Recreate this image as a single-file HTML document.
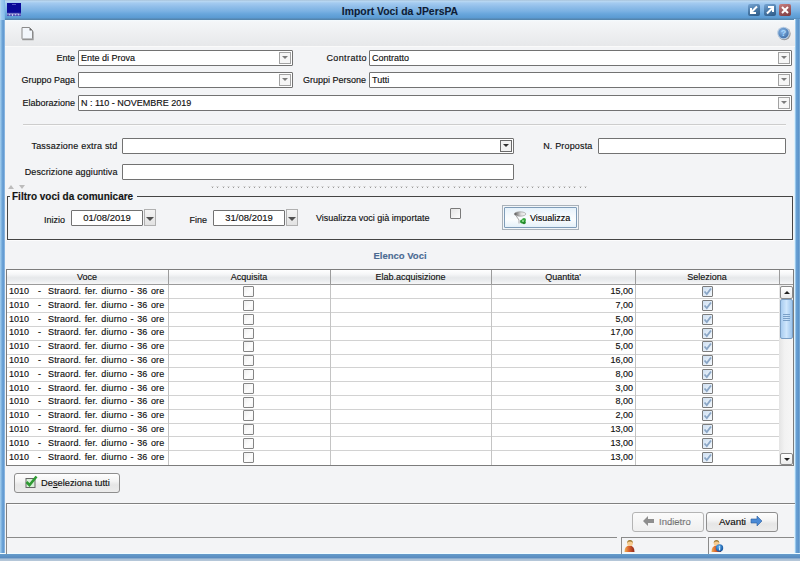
<!DOCTYPE html><html><head><meta charset="utf-8"><style>
*{box-sizing:border-box;margin:0;padding:0}
html,body{width:800px;height:561px;overflow:hidden}
body{position:relative;background:#f3f4f6;font-family:"Liberation Sans",sans-serif;font-size:9px;color:#111;-webkit-text-stroke:0.15px #111}
.a{position:absolute}
.t{position:absolute;white-space:nowrap;line-height:16px;height:16px}
.r{text-align:right}
.cb{position:absolute;background:#fff;border:1px solid #727272;border-radius:1px}
.cb .v{position:absolute;left:2px;top:0;line-height:14px;white-space:nowrap}
.ab{position:absolute;right:1px;top:1px;width:12px;height:12px;border:1px solid #a2a2a2;background:#f6f6f6}
.ab:after{content:"";position:absolute;left:2px;top:3px;border-left:3px solid transparent;border-right:3px solid transparent;border-top:3px solid #7c7c7c}
.ab.dk:after{border-top-color:#303030}
.btn{position:absolute;border:1px solid #8e8e8e;border-radius:3px;background:linear-gradient(#fefefe 0%,#f4f4f4 40%,#e6e6e6 60%,#ececec 100%);}
.ck{position:absolute;width:11px;height:11px;border:1px solid #7a7a7a;border-radius:1px;background:linear-gradient(135deg,#e4e4e4,#fdfdfd)}
.row{position:absolute;left:0;width:773px;height:14px;border-bottom:1px solid #d4d4d4}
.cell{position:absolute;top:0;height:13px;line-height:13px;white-space:nowrap}
.vl{position:absolute;top:0;width:1px;background:#c8c8c8}
</style></head><body>
<div class="a" style="left:0;top:0;width:800px;height:20px;background:linear-gradient(#a9c3da 0px,#b6d6f2 1.5px,#a4cbf0 3px,#8fbde9 7px,#7cb2e3 11px,#68a6dc 14px,#5a9ad2 18px,#5585ad 19px,#5585ad 20px)"></div>
<div class="a" style="left:7px;top:3px;width:14px;height:13px;background:#0a0a98"></div>
<svg class="a" style="left:7px;top:3px" width="14" height="14"><rect x="0" y="0" width="14" height="10.5" fill="#0a0a98"/><rect x="0" y="9.5" width="14" height="3.5" fill="#2a2aa4"/><path d="M1 10 v2.5 M2.5 10.5 v2 M4 10 v2.5 M5.5 10.5 v2.5 M7 10 v2.5 M8.5 10.5 v2 M10 10 v2.5 M11.5 10.5 v2 M13 10.5 v2" stroke="#d8d8f4" stroke-width="0.9"/><path d="M5 1.5 h4" stroke="#6a6ad0" stroke-width="0.8"/></svg>
<div class="a" style="left:0;top:0;width:800px;height:20px;text-align:center;font-weight:bold;font-size:10.4px;line-height:23px;color:#0e1c35;-webkit-text-stroke:0.1px #0e1c35">Import Voci da JPersPA</div>
<div class="a" style="left:748px;top:4px;width:12px;height:12px;border-radius:2px;background:linear-gradient(160deg,#78a6d4,#4a7aa8 50%,#2e5a86)"><svg width="12" height="12" style="position:absolute;left:0;top:0"><path d="M9 2.5 L4 7.5 M3 4 L3 9 L8 9" stroke="#fff" stroke-width="2" fill="none"/></svg></div>
<div class="a" style="left:764px;top:4px;width:12px;height:12px;border-radius:2px;background:linear-gradient(160deg,#78a6d4,#4a7aa8 50%,#2e5a86)"><svg width="12" height="12" style="position:absolute;left:0;top:0"><path d="M3 9.5 L8 4.5 M4 3 L9 3 L9 8" stroke="#fff" stroke-width="2" fill="none"/></svg></div>
<div class="a" style="left:779px;top:4px;width:12px;height:12px;border-radius:2px;background:linear-gradient(160deg,#c88080,#a05a5e 50%,#7a3a40)"><svg width="12" height="12" style="position:absolute;left:0;top:0"><path d="M3 3 L9 9 M9 3 L3 9" stroke="#fff" stroke-width="2" fill="none"/></svg></div>
<div class="a" style="left:0;top:19px;width:5px;height:542px;background:linear-gradient(90deg,#a8d0f0 0,#80b4e0 1.5px,#6098d0 3px,#6a9fd4 4px,#a0c8ea 5px)"></div>
<div class="a" style="left:794px;top:19px;width:6px;height:542px;background:linear-gradient(90deg,#f4f5f7 0,#c8ecff 1px,#6aa2d6 2px,#5a92c8 5px,#90bce0 6px)"></div>
<div class="a" style="left:0;top:553px;width:800px;height:1px;background:#f0fcff"></div>
<div class="a" style="left:0;top:0;width:5px;height:20px;background:linear-gradient(90deg,#b8d8f0 0,#9ccaf0 1.5px,#8cc0ea 4px,#7ab4e4 5px)"></div>
<div class="a" style="left:0;top:554px;width:800px;height:7px;background:linear-gradient(#6a9ccc 0,#6098c8 1px,#5a8cc0 3.5px,#6a98c4 4px,#a8c0d8 5px,#b8c8d8 7px)"></div>
<div class="a" style="left:5px;top:20px;width:790px;height:27px;background:linear-gradient(#f4fbfe 0,#f4f6f8 2px,#e7e8ea 26px,#fafafa 26px)"></div>
<svg class="a" style="left:20px;top:26px" width="15" height="15"><path d="M3 3 H10 L13 6 V13.5 H3 Z" fill="none" stroke="#6a6a6a" stroke-width="1.4" opacity="0.6"/><path d="M2 1.5 H9.5 L12.5 4.5 V12.5 Q12.5 13 12 13 H2.5 Q2 13 2 12.5 Z" fill="#f2f6fb" stroke="#8a8a8a" stroke-width="1"/><path d="M9.5 1.5 L12.5 4.5 H9.5 Z" fill="#6a6a6a"/></svg>
<svg class="a" style="left:776px;top:26px" width="16" height="15"><defs><radialGradient id="hg" cx="0.4" cy="0.35" r="0.7"><stop offset="0" stop-color="#8ab8e8"/><stop offset="1" stop-color="#3f6fa8"/></radialGradient></defs><circle cx="8.3" cy="7.8" r="6.4" fill="#303030" opacity="0.45"/><circle cx="7.5" cy="7" r="6.3" fill="#b8cde4"/><circle cx="7.5" cy="7" r="5.2" fill="url(#hg)"/><text x="7.6" y="10.2" font-family="Liberation Sans" font-weight="bold" font-size="9" fill="#a8d8ff" text-anchor="middle">?</text></svg>
<div class="t r" style="left:-125px;width:200px;top:50px;height:16px;line-height:16px;">Ente</div>
<div class="cb" style="left:78px;top:50px;width:215px;height:16px"><div class="v">Ente di Prova</div><div class="ab" style=""></div></div>
<div class="t r" style="left:167px;width:200px;top:50px;height:16px;line-height:16px;letter-spacing:0.4px">Contratto</div>
<div class="cb" style="left:369px;top:50px;width:423px;height:16px"><div class="v">Contratto</div><div class="ab" style=""></div></div>
<div class="t r" style="left:-125px;width:200px;top:72px;height:16px;line-height:16px;">Gruppo Paga</div>
<div class="cb" style="left:78px;top:72px;width:215px;height:16px"><div class="ab" style=""></div></div>
<div class="t r" style="left:166px;width:200px;top:72px;height:16px;line-height:16px;">Gruppi Persone</div>
<div class="cb" style="left:369px;top:72px;width:423px;height:16px"><div class="v">Tutti</div><div class="ab" style=""></div></div>
<div class="t r" style="left:-125px;width:200px;top:95px;height:16px;line-height:16px;">Elaborazione</div>
<div class="cb" style="left:78px;top:95px;width:714px;height:16px"><div class="v">N : 110 - NOVEMBRE 2019</div><div class="ab" style=""></div></div>
<div class="a" style="left:23px;top:124px;width:763px;height:1px;background:#cdcdcd"></div>
<div class="a" style="left:23px;top:125px;width:763px;height:1px;background:#fbfbfb"></div>
<div class="t r" style="left:-82.5px;width:200px;top:138px;height:16px;line-height:16px;letter-spacing:0.2px">Tassazione extra std</div>
<div class="cb" style="left:122px;top:138px;width:392px;height:16px"><div class="ab dk" style="border-color:#6a6a6a;background:#f2f2f2"></div></div>
<div class="t r" style="left:392.5px;width:200px;top:138px;height:16px;line-height:16px;letter-spacing:0.16px">N. Proposta</div>
<div class="cb" style="left:598px;top:138px;width:188px;height:16px"></div>
<div class="t r" style="left:-82.5px;width:200px;top:164px;height:16px;line-height:16px;letter-spacing:0.1px">Descrizione aggiuntiva</div>
<div class="cb" style="left:122px;top:164px;width:392px;height:16px"></div>
<div class="a" style="left:8px;top:185px;width:0;height:0;border-left:3.5px solid transparent;border-right:3.5px solid transparent;border-bottom:4px solid #bcbcbc"></div>
<div class="a" style="left:18.5px;top:185px;width:0;height:0;border-left:3.5px solid transparent;border-right:3.5px solid transparent;border-top:4px solid #bcbcbc"></div>
<div class="a" style="left:212px;top:187px;width:1px;height:1px;background:#9a9a9a"></div><div class="a" style="left:211px;top:186px;width:3px;height:1px;background:#dcdcdc"></div><div class="a" style="left:217px;top:187px;width:1px;height:1px;background:#9a9a9a"></div><div class="a" style="left:216px;top:186px;width:3px;height:1px;background:#dcdcdc"></div><div class="a" style="left:223px;top:187px;width:1px;height:1px;background:#9a9a9a"></div><div class="a" style="left:222px;top:186px;width:3px;height:1px;background:#dcdcdc"></div><div class="a" style="left:228px;top:187px;width:1px;height:1px;background:#9a9a9a"></div><div class="a" style="left:227px;top:186px;width:3px;height:1px;background:#dcdcdc"></div><div class="a" style="left:233px;top:187px;width:1px;height:1px;background:#9a9a9a"></div><div class="a" style="left:232px;top:186px;width:3px;height:1px;background:#dcdcdc"></div><div class="a" style="left:238px;top:187px;width:1px;height:1px;background:#9a9a9a"></div><div class="a" style="left:237px;top:186px;width:3px;height:1px;background:#dcdcdc"></div><div class="a" style="left:244px;top:187px;width:1px;height:1px;background:#9a9a9a"></div><div class="a" style="left:243px;top:186px;width:3px;height:1px;background:#dcdcdc"></div><div class="a" style="left:249px;top:187px;width:1px;height:1px;background:#9a9a9a"></div><div class="a" style="left:248px;top:186px;width:3px;height:1px;background:#dcdcdc"></div><div class="a" style="left:254px;top:187px;width:1px;height:1px;background:#9a9a9a"></div><div class="a" style="left:253px;top:186px;width:3px;height:1px;background:#dcdcdc"></div><div class="a" style="left:259px;top:187px;width:1px;height:1px;background:#9a9a9a"></div><div class="a" style="left:258px;top:186px;width:3px;height:1px;background:#dcdcdc"></div><div class="a" style="left:265px;top:187px;width:1px;height:1px;background:#9a9a9a"></div><div class="a" style="left:264px;top:186px;width:3px;height:1px;background:#dcdcdc"></div><div class="a" style="left:270px;top:187px;width:1px;height:1px;background:#9a9a9a"></div><div class="a" style="left:269px;top:186px;width:3px;height:1px;background:#dcdcdc"></div><div class="a" style="left:275px;top:187px;width:1px;height:1px;background:#9a9a9a"></div><div class="a" style="left:274px;top:186px;width:3px;height:1px;background:#dcdcdc"></div><div class="a" style="left:280px;top:187px;width:1px;height:1px;background:#9a9a9a"></div><div class="a" style="left:279px;top:186px;width:3px;height:1px;background:#dcdcdc"></div><div class="a" style="left:286px;top:187px;width:1px;height:1px;background:#9a9a9a"></div><div class="a" style="left:285px;top:186px;width:3px;height:1px;background:#dcdcdc"></div><div class="a" style="left:291px;top:187px;width:1px;height:1px;background:#9a9a9a"></div><div class="a" style="left:290px;top:186px;width:3px;height:1px;background:#dcdcdc"></div><div class="a" style="left:296px;top:187px;width:1px;height:1px;background:#9a9a9a"></div><div class="a" style="left:295px;top:186px;width:3px;height:1px;background:#dcdcdc"></div><div class="a" style="left:301px;top:187px;width:1px;height:1px;background:#9a9a9a"></div><div class="a" style="left:300px;top:186px;width:3px;height:1px;background:#dcdcdc"></div><div class="a" style="left:307px;top:187px;width:1px;height:1px;background:#9a9a9a"></div><div class="a" style="left:306px;top:186px;width:3px;height:1px;background:#dcdcdc"></div><div class="a" style="left:312px;top:187px;width:1px;height:1px;background:#9a9a9a"></div><div class="a" style="left:311px;top:186px;width:3px;height:1px;background:#dcdcdc"></div><div class="a" style="left:317px;top:187px;width:1px;height:1px;background:#9a9a9a"></div><div class="a" style="left:316px;top:186px;width:3px;height:1px;background:#dcdcdc"></div><div class="a" style="left:322px;top:187px;width:1px;height:1px;background:#9a9a9a"></div><div class="a" style="left:321px;top:186px;width:3px;height:1px;background:#dcdcdc"></div><div class="a" style="left:328px;top:187px;width:1px;height:1px;background:#9a9a9a"></div><div class="a" style="left:327px;top:186px;width:3px;height:1px;background:#dcdcdc"></div><div class="a" style="left:333px;top:187px;width:1px;height:1px;background:#9a9a9a"></div><div class="a" style="left:332px;top:186px;width:3px;height:1px;background:#dcdcdc"></div><div class="a" style="left:338px;top:187px;width:1px;height:1px;background:#9a9a9a"></div><div class="a" style="left:337px;top:186px;width:3px;height:1px;background:#dcdcdc"></div><div class="a" style="left:343px;top:187px;width:1px;height:1px;background:#9a9a9a"></div><div class="a" style="left:342px;top:186px;width:3px;height:1px;background:#dcdcdc"></div><div class="a" style="left:349px;top:187px;width:1px;height:1px;background:#9a9a9a"></div><div class="a" style="left:348px;top:186px;width:3px;height:1px;background:#dcdcdc"></div><div class="a" style="left:354px;top:187px;width:1px;height:1px;background:#9a9a9a"></div><div class="a" style="left:353px;top:186px;width:3px;height:1px;background:#dcdcdc"></div><div class="a" style="left:359px;top:187px;width:1px;height:1px;background:#9a9a9a"></div><div class="a" style="left:358px;top:186px;width:3px;height:1px;background:#dcdcdc"></div><div class="a" style="left:364px;top:187px;width:1px;height:1px;background:#9a9a9a"></div><div class="a" style="left:363px;top:186px;width:3px;height:1px;background:#dcdcdc"></div><div class="a" style="left:370px;top:187px;width:1px;height:1px;background:#9a9a9a"></div><div class="a" style="left:369px;top:186px;width:3px;height:1px;background:#dcdcdc"></div><div class="a" style="left:375px;top:187px;width:1px;height:1px;background:#9a9a9a"></div><div class="a" style="left:374px;top:186px;width:3px;height:1px;background:#dcdcdc"></div><div class="a" style="left:380px;top:187px;width:1px;height:1px;background:#9a9a9a"></div><div class="a" style="left:379px;top:186px;width:3px;height:1px;background:#dcdcdc"></div><div class="a" style="left:385px;top:187px;width:1px;height:1px;background:#9a9a9a"></div><div class="a" style="left:384px;top:186px;width:3px;height:1px;background:#dcdcdc"></div><div class="a" style="left:391px;top:187px;width:1px;height:1px;background:#9a9a9a"></div><div class="a" style="left:390px;top:186px;width:3px;height:1px;background:#dcdcdc"></div><div class="a" style="left:396px;top:187px;width:1px;height:1px;background:#9a9a9a"></div><div class="a" style="left:395px;top:186px;width:3px;height:1px;background:#dcdcdc"></div><div class="a" style="left:401px;top:187px;width:1px;height:1px;background:#9a9a9a"></div><div class="a" style="left:400px;top:186px;width:3px;height:1px;background:#dcdcdc"></div><div class="a" style="left:406px;top:187px;width:1px;height:1px;background:#9a9a9a"></div><div class="a" style="left:405px;top:186px;width:3px;height:1px;background:#dcdcdc"></div><div class="a" style="left:412px;top:187px;width:1px;height:1px;background:#9a9a9a"></div><div class="a" style="left:411px;top:186px;width:3px;height:1px;background:#dcdcdc"></div><div class="a" style="left:417px;top:187px;width:1px;height:1px;background:#9a9a9a"></div><div class="a" style="left:416px;top:186px;width:3px;height:1px;background:#dcdcdc"></div><div class="a" style="left:422px;top:187px;width:1px;height:1px;background:#9a9a9a"></div><div class="a" style="left:421px;top:186px;width:3px;height:1px;background:#dcdcdc"></div><div class="a" style="left:427px;top:187px;width:1px;height:1px;background:#9a9a9a"></div><div class="a" style="left:426px;top:186px;width:3px;height:1px;background:#dcdcdc"></div><div class="a" style="left:433px;top:187px;width:1px;height:1px;background:#9a9a9a"></div><div class="a" style="left:432px;top:186px;width:3px;height:1px;background:#dcdcdc"></div><div class="a" style="left:438px;top:187px;width:1px;height:1px;background:#9a9a9a"></div><div class="a" style="left:437px;top:186px;width:3px;height:1px;background:#dcdcdc"></div><div class="a" style="left:443px;top:187px;width:1px;height:1px;background:#9a9a9a"></div><div class="a" style="left:442px;top:186px;width:3px;height:1px;background:#dcdcdc"></div><div class="a" style="left:448px;top:187px;width:1px;height:1px;background:#9a9a9a"></div><div class="a" style="left:447px;top:186px;width:3px;height:1px;background:#dcdcdc"></div><div class="a" style="left:454px;top:187px;width:1px;height:1px;background:#9a9a9a"></div><div class="a" style="left:453px;top:186px;width:3px;height:1px;background:#dcdcdc"></div><div class="a" style="left:459px;top:187px;width:1px;height:1px;background:#9a9a9a"></div><div class="a" style="left:458px;top:186px;width:3px;height:1px;background:#dcdcdc"></div><div class="a" style="left:464px;top:187px;width:1px;height:1px;background:#9a9a9a"></div><div class="a" style="left:463px;top:186px;width:3px;height:1px;background:#dcdcdc"></div><div class="a" style="left:469px;top:187px;width:1px;height:1px;background:#9a9a9a"></div><div class="a" style="left:468px;top:186px;width:3px;height:1px;background:#dcdcdc"></div><div class="a" style="left:475px;top:187px;width:1px;height:1px;background:#9a9a9a"></div><div class="a" style="left:474px;top:186px;width:3px;height:1px;background:#dcdcdc"></div><div class="a" style="left:480px;top:187px;width:1px;height:1px;background:#9a9a9a"></div><div class="a" style="left:479px;top:186px;width:3px;height:1px;background:#dcdcdc"></div><div class="a" style="left:485px;top:187px;width:1px;height:1px;background:#9a9a9a"></div><div class="a" style="left:484px;top:186px;width:3px;height:1px;background:#dcdcdc"></div><div class="a" style="left:490px;top:187px;width:1px;height:1px;background:#9a9a9a"></div><div class="a" style="left:489px;top:186px;width:3px;height:1px;background:#dcdcdc"></div><div class="a" style="left:496px;top:187px;width:1px;height:1px;background:#9a9a9a"></div><div class="a" style="left:495px;top:186px;width:3px;height:1px;background:#dcdcdc"></div><div class="a" style="left:501px;top:187px;width:1px;height:1px;background:#9a9a9a"></div><div class="a" style="left:500px;top:186px;width:3px;height:1px;background:#dcdcdc"></div><div class="a" style="left:506px;top:187px;width:1px;height:1px;background:#9a9a9a"></div><div class="a" style="left:505px;top:186px;width:3px;height:1px;background:#dcdcdc"></div><div class="a" style="left:511px;top:187px;width:1px;height:1px;background:#9a9a9a"></div><div class="a" style="left:510px;top:186px;width:3px;height:1px;background:#dcdcdc"></div><div class="a" style="left:517px;top:187px;width:1px;height:1px;background:#9a9a9a"></div><div class="a" style="left:516px;top:186px;width:3px;height:1px;background:#dcdcdc"></div><div class="a" style="left:522px;top:187px;width:1px;height:1px;background:#9a9a9a"></div><div class="a" style="left:521px;top:186px;width:3px;height:1px;background:#dcdcdc"></div><div class="a" style="left:527px;top:187px;width:1px;height:1px;background:#9a9a9a"></div><div class="a" style="left:526px;top:186px;width:3px;height:1px;background:#dcdcdc"></div><div class="a" style="left:532px;top:187px;width:1px;height:1px;background:#9a9a9a"></div><div class="a" style="left:531px;top:186px;width:3px;height:1px;background:#dcdcdc"></div><div class="a" style="left:538px;top:187px;width:1px;height:1px;background:#9a9a9a"></div><div class="a" style="left:537px;top:186px;width:3px;height:1px;background:#dcdcdc"></div><div class="a" style="left:543px;top:187px;width:1px;height:1px;background:#9a9a9a"></div><div class="a" style="left:542px;top:186px;width:3px;height:1px;background:#dcdcdc"></div><div class="a" style="left:548px;top:187px;width:1px;height:1px;background:#9a9a9a"></div><div class="a" style="left:547px;top:186px;width:3px;height:1px;background:#dcdcdc"></div><div class="a" style="left:553px;top:187px;width:1px;height:1px;background:#9a9a9a"></div><div class="a" style="left:552px;top:186px;width:3px;height:1px;background:#dcdcdc"></div><div class="a" style="left:559px;top:187px;width:1px;height:1px;background:#9a9a9a"></div><div class="a" style="left:558px;top:186px;width:3px;height:1px;background:#dcdcdc"></div><div class="a" style="left:564px;top:187px;width:1px;height:1px;background:#9a9a9a"></div><div class="a" style="left:563px;top:186px;width:3px;height:1px;background:#dcdcdc"></div><div class="a" style="left:569px;top:187px;width:1px;height:1px;background:#9a9a9a"></div><div class="a" style="left:568px;top:186px;width:3px;height:1px;background:#dcdcdc"></div><div class="a" style="left:574px;top:187px;width:1px;height:1px;background:#9a9a9a"></div><div class="a" style="left:573px;top:186px;width:3px;height:1px;background:#dcdcdc"></div><div class="a" style="left:580px;top:187px;width:1px;height:1px;background:#9a9a9a"></div><div class="a" style="left:579px;top:186px;width:3px;height:1px;background:#dcdcdc"></div><div class="a" style="left:585px;top:187px;width:1px;height:1px;background:#9a9a9a"></div><div class="a" style="left:584px;top:186px;width:3px;height:1px;background:#dcdcdc"></div>
<div class="a" style="left:7px;top:196px;width:786px;height:44px;border:1px solid #444"></div>
<div class="a" style="left:7px;top:240px;width:787px;height:1px;background:#fcfcfd"></div>
<div class="a" style="left:10px;top:189px;width:127px;height:14px;background:#f3f4f6"></div>
<div class="t" style="left:12px;top:190px;height:14px;line-height:14px;font-weight:bold;font-size:10px;color:#141414">Filtro voci da comunicare</div>
<div class="t r" style="left:-135px;width:200px;top:212px;height:16px;line-height:16px;">Inizio</div>
<div class="cb" style="left:71px;top:210px;width:72px;height:16px;text-align:center;line-height:14px;font-size:9.5px">01/08/2019</div>
<div class="a" style="left:144px;top:209px;width:12px;height:17px;border:1px solid #b0b0b0;background:linear-gradient(#f4f4f4,#e2e2e2)"><div class="a" style="left:1px;top:7px;border-left:4px solid transparent;border-right:4px solid transparent;border-top:4px solid #505050"></div></div>
<div class="t r" style="left:7px;width:200px;top:212px;height:16px;line-height:16px;">Fine</div>
<div class="cb" style="left:213px;top:210px;width:72px;height:16px;text-align:center;line-height:14px;font-size:9.5px">31/08/2019</div>
<div class="a" style="left:286px;top:209px;width:12px;height:17px;border:1px solid #b0b0b0;background:linear-gradient(#f4f4f4,#e2e2e2)"><div class="a" style="left:1px;top:7px;border-left:4px solid transparent;border-right:4px solid transparent;border-top:4px solid #505050"></div></div>
<div class="t" style="left:316px;top:210px">Visualizza voci già importate</div>
<div class="ck" style="left:450px;top:208px"></div>
<div class="a" style="left:502px;top:205px;width:77px;height:25px;border:1px solid #a9b1b9;background:#f2f6f9"></div>
<div class="a" style="left:504px;top:207px;width:73px;height:21px;border:1px solid #7f9cb8;border-radius:1px;background:linear-gradient(#e6f2fb 0%,#f6fafd 40%,#fbfdfe 60%,#e4f0f9 100%)"></div>
<svg class="a" style="left:513px;top:211px" width="15" height="14"><defs><linearGradient id="fg" x1="0" x2="1"><stop offset="0" stop-color="#505050"/><stop offset="0.6" stop-color="#e0e0e0"/><stop offset="1" stop-color="#f8f8f8"/></linearGradient></defs><ellipse cx="7" cy="3" rx="5.8" ry="2.2" fill="url(#fg)" stroke="#909090" stroke-width="0.6"/><path d="M2.5 4 L6 9 V12.5" fill="none" stroke="#a8a8a8" stroke-width="1"/><circle cx="9" cy="10.5" r="2" fill="#2a9a34"/><circle cx="11" cy="9" r="2" fill="#38aa40"/><circle cx="11" cy="11.5" r="1.8" fill="#248a2c"/><circle cx="10" cy="10" r="1" fill="#9ae09a"/></svg>
<div class="t" style="left:530px;top:210px;color:#000">Visualizza</div>
<div class="a" style="left:0;top:247px;width:800px;height:17px;line-height:17px;text-align:center;font-weight:bold;font-size:9.5px;color:#4a6a92;-webkit-text-stroke:0.1px #4a6a92">Elenco Voci</div>
<div class="a" style="left:6px;top:269px;width:788px;height:197px;border:1px solid #7c7c7c;background:#fff;overflow:hidden">
<div class="a" style="left:0;top:0;width:786px;height:15px;background:linear-gradient(#ffffff 0,#f6f7f8 30%,#e6e8ea 55%,#eceef0 80%,#f7f7f8 100%);border-bottom:1px solid #9a9a9a"></div>
<div class="cell" style="left:-1px;width:162px;text-align:center;height:15px;line-height:15px">Voce</div>
<div class="cell" style="left:161px;width:162px;text-align:center;height:15px;line-height:15px">Acquisita</div>
<div class="cell" style="left:323px;width:161px;text-align:center;height:15px;line-height:15px">Elab.acquisizione</div>
<div class="cell" style="left:484px;width:144px;text-align:center;height:15px;line-height:15px">Quantita'</div>
<div class="cell" style="left:628px;width:144px;text-align:center;height:15px;line-height:15px">Seleziona</div>
<div class="a" style="left:161px;top:0;width:1px;height:15px;background:#9c9c9c"></div>
<div class="a" style="left:323px;top:0;width:1px;height:15px;background:#9c9c9c"></div>
<div class="a" style="left:484px;top:0;width:1px;height:15px;background:#9c9c9c"></div>
<div class="a" style="left:628px;top:0;width:1px;height:15px;background:#9c9c9c"></div>
<div class="a" style="left:772px;top:0;width:1px;height:15px;background:#9c9c9c"></div>
<div class="a" style="left:772px;top:15px;width:14px;height:181px;background:linear-gradient(90deg,#e4e4e4,#f2f2f2 40%,#f6f6f6)"></div>
<div class="cell" style="left:2px;top:15px;height:14px;line-height:13px">1010</div><div class="cell" style="left:31px;top:15px;height:14px;line-height:13px">-</div><div class="cell" style="left:41px;top:15px;height:14px;line-height:13px;letter-spacing:0.15px;word-spacing:0.8px">Straord. fer. diurno - 36 ore</div>
<div class="ck" style="left:236px;top:16px;width:11px;height:11px;border-color:#858585;background:linear-gradient(135deg,#f0f0f0,#fdfdfd 60%,#f2f2f2)"></div>
<div class="cell r" style="left:484px;width:142px;top:15px;height:14px;line-height:13px">15,00</div>
<div class="ck" style="left:695px;top:16px;width:11px;height:11px;border-color:#7c7c7c;background:linear-gradient(135deg,#cfe0f2,#f4f8fc)"><svg width="9" height="9" style="position:absolute;left:0;top:0"><path d="M1.5 4.5 L3.8 7 L8 1.5" stroke="#8aa6c6" stroke-width="1.8" fill="none"/></svg></div>
<div class="a" style="left:0;top:28px;width:772px;height:1px;background:#d2d2d2"></div>
<div class="cell" style="left:2px;top:29px;height:14px;line-height:13px">1010</div><div class="cell" style="left:31px;top:29px;height:14px;line-height:13px">-</div><div class="cell" style="left:41px;top:29px;height:14px;line-height:13px;letter-spacing:0.15px;word-spacing:0.8px">Straord. fer. diurno - 36 ore</div>
<div class="ck" style="left:236px;top:30px;width:11px;height:11px;border-color:#858585;background:linear-gradient(135deg,#f0f0f0,#fdfdfd 60%,#f2f2f2)"></div>
<div class="cell r" style="left:484px;width:142px;top:29px;height:14px;line-height:13px">7,00</div>
<div class="ck" style="left:695px;top:30px;width:11px;height:11px;border-color:#7c7c7c;background:linear-gradient(135deg,#cfe0f2,#f4f8fc)"><svg width="9" height="9" style="position:absolute;left:0;top:0"><path d="M1.5 4.5 L3.8 7 L8 1.5" stroke="#8aa6c6" stroke-width="1.8" fill="none"/></svg></div>
<div class="a" style="left:0;top:42px;width:772px;height:1px;background:#d2d2d2"></div>
<div class="cell" style="left:2px;top:43px;height:14px;line-height:13px">1010</div><div class="cell" style="left:31px;top:43px;height:14px;line-height:13px">-</div><div class="cell" style="left:41px;top:43px;height:14px;line-height:13px;letter-spacing:0.15px;word-spacing:0.8px">Straord. fer. diurno - 36 ore</div>
<div class="ck" style="left:236px;top:44px;width:11px;height:11px;border-color:#858585;background:linear-gradient(135deg,#f0f0f0,#fdfdfd 60%,#f2f2f2)"></div>
<div class="cell r" style="left:484px;width:142px;top:43px;height:14px;line-height:13px">5,00</div>
<div class="ck" style="left:695px;top:44px;width:11px;height:11px;border-color:#7c7c7c;background:linear-gradient(135deg,#cfe0f2,#f4f8fc)"><svg width="9" height="9" style="position:absolute;left:0;top:0"><path d="M1.5 4.5 L3.8 7 L8 1.5" stroke="#8aa6c6" stroke-width="1.8" fill="none"/></svg></div>
<div class="a" style="left:0;top:56px;width:772px;height:1px;background:#d2d2d2"></div>
<div class="cell" style="left:2px;top:56px;height:14px;line-height:13px">1010</div><div class="cell" style="left:31px;top:56px;height:14px;line-height:13px">-</div><div class="cell" style="left:41px;top:56px;height:14px;line-height:13px;letter-spacing:0.15px;word-spacing:0.8px">Straord. fer. diurno - 36 ore</div>
<div class="ck" style="left:236px;top:58px;width:11px;height:11px;border-color:#858585;background:linear-gradient(135deg,#f0f0f0,#fdfdfd 60%,#f2f2f2)"></div>
<div class="cell r" style="left:484px;width:142px;top:56px;height:14px;line-height:13px">17,00</div>
<div class="ck" style="left:695px;top:58px;width:11px;height:11px;border-color:#7c7c7c;background:linear-gradient(135deg,#cfe0f2,#f4f8fc)"><svg width="9" height="9" style="position:absolute;left:0;top:0"><path d="M1.5 4.5 L3.8 7 L8 1.5" stroke="#8aa6c6" stroke-width="1.8" fill="none"/></svg></div>
<div class="a" style="left:0;top:70px;width:772px;height:1px;background:#d2d2d2"></div>
<div class="cell" style="left:2px;top:70px;height:14px;line-height:13px">1010</div><div class="cell" style="left:31px;top:70px;height:14px;line-height:13px">-</div><div class="cell" style="left:41px;top:70px;height:14px;line-height:13px;letter-spacing:0.15px;word-spacing:0.8px">Straord. fer. diurno - 36 ore</div>
<div class="ck" style="left:236px;top:71px;width:11px;height:11px;border-color:#858585;background:linear-gradient(135deg,#f0f0f0,#fdfdfd 60%,#f2f2f2)"></div>
<div class="cell r" style="left:484px;width:142px;top:70px;height:14px;line-height:13px">5,00</div>
<div class="ck" style="left:695px;top:71px;width:11px;height:11px;border-color:#7c7c7c;background:linear-gradient(135deg,#cfe0f2,#f4f8fc)"><svg width="9" height="9" style="position:absolute;left:0;top:0"><path d="M1.5 4.5 L3.8 7 L8 1.5" stroke="#8aa6c6" stroke-width="1.8" fill="none"/></svg></div>
<div class="a" style="left:0;top:84px;width:772px;height:1px;background:#d2d2d2"></div>
<div class="cell" style="left:2px;top:84px;height:14px;line-height:13px">1010</div><div class="cell" style="left:31px;top:84px;height:14px;line-height:13px">-</div><div class="cell" style="left:41px;top:84px;height:14px;line-height:13px;letter-spacing:0.15px;word-spacing:0.8px">Straord. fer. diurno - 36 ore</div>
<div class="ck" style="left:236px;top:85px;width:11px;height:11px;border-color:#858585;background:linear-gradient(135deg,#f0f0f0,#fdfdfd 60%,#f2f2f2)"></div>
<div class="cell r" style="left:484px;width:142px;top:84px;height:14px;line-height:13px">16,00</div>
<div class="ck" style="left:695px;top:85px;width:11px;height:11px;border-color:#7c7c7c;background:linear-gradient(135deg,#cfe0f2,#f4f8fc)"><svg width="9" height="9" style="position:absolute;left:0;top:0"><path d="M1.5 4.5 L3.8 7 L8 1.5" stroke="#8aa6c6" stroke-width="1.8" fill="none"/></svg></div>
<div class="a" style="left:0;top:97px;width:772px;height:1px;background:#d2d2d2"></div>
<div class="cell" style="left:2px;top:98px;height:14px;line-height:13px">1010</div><div class="cell" style="left:31px;top:98px;height:14px;line-height:13px">-</div><div class="cell" style="left:41px;top:98px;height:14px;line-height:13px;letter-spacing:0.15px;word-spacing:0.8px">Straord. fer. diurno - 36 ore</div>
<div class="ck" style="left:236px;top:99px;width:11px;height:11px;border-color:#858585;background:linear-gradient(135deg,#f0f0f0,#fdfdfd 60%,#f2f2f2)"></div>
<div class="cell r" style="left:484px;width:142px;top:98px;height:14px;line-height:13px">8,00</div>
<div class="ck" style="left:695px;top:99px;width:11px;height:11px;border-color:#7c7c7c;background:linear-gradient(135deg,#cfe0f2,#f4f8fc)"><svg width="9" height="9" style="position:absolute;left:0;top:0"><path d="M1.5 4.5 L3.8 7 L8 1.5" stroke="#8aa6c6" stroke-width="1.8" fill="none"/></svg></div>
<div class="a" style="left:0;top:111px;width:772px;height:1px;background:#d2d2d2"></div>
<div class="cell" style="left:2px;top:112px;height:14px;line-height:13px">1010</div><div class="cell" style="left:31px;top:112px;height:14px;line-height:13px">-</div><div class="cell" style="left:41px;top:112px;height:14px;line-height:13px;letter-spacing:0.15px;word-spacing:0.8px">Straord. fer. diurno - 36 ore</div>
<div class="ck" style="left:236px;top:113px;width:11px;height:11px;border-color:#858585;background:linear-gradient(135deg,#f0f0f0,#fdfdfd 60%,#f2f2f2)"></div>
<div class="cell r" style="left:484px;width:142px;top:112px;height:14px;line-height:13px">3,00</div>
<div class="ck" style="left:695px;top:113px;width:11px;height:11px;border-color:#7c7c7c;background:linear-gradient(135deg,#cfe0f2,#f4f8fc)"><svg width="9" height="9" style="position:absolute;left:0;top:0"><path d="M1.5 4.5 L3.8 7 L8 1.5" stroke="#8aa6c6" stroke-width="1.8" fill="none"/></svg></div>
<div class="a" style="left:0;top:125px;width:772px;height:1px;background:#d2d2d2"></div>
<div class="cell" style="left:2px;top:125px;height:14px;line-height:13px">1010</div><div class="cell" style="left:31px;top:125px;height:14px;line-height:13px">-</div><div class="cell" style="left:41px;top:125px;height:14px;line-height:13px;letter-spacing:0.15px;word-spacing:0.8px">Straord. fer. diurno - 36 ore</div>
<div class="ck" style="left:236px;top:127px;width:11px;height:11px;border-color:#858585;background:linear-gradient(135deg,#f0f0f0,#fdfdfd 60%,#f2f2f2)"></div>
<div class="cell r" style="left:484px;width:142px;top:125px;height:14px;line-height:13px">8,00</div>
<div class="ck" style="left:695px;top:127px;width:11px;height:11px;border-color:#7c7c7c;background:linear-gradient(135deg,#cfe0f2,#f4f8fc)"><svg width="9" height="9" style="position:absolute;left:0;top:0"><path d="M1.5 4.5 L3.8 7 L8 1.5" stroke="#8aa6c6" stroke-width="1.8" fill="none"/></svg></div>
<div class="a" style="left:0;top:139px;width:772px;height:1px;background:#d2d2d2"></div>
<div class="cell" style="left:2px;top:139px;height:14px;line-height:13px">1010</div><div class="cell" style="left:31px;top:139px;height:14px;line-height:13px">-</div><div class="cell" style="left:41px;top:139px;height:14px;line-height:13px;letter-spacing:0.15px;word-spacing:0.8px">Straord. fer. diurno - 36 ore</div>
<div class="ck" style="left:236px;top:140px;width:11px;height:11px;border-color:#858585;background:linear-gradient(135deg,#f0f0f0,#fdfdfd 60%,#f2f2f2)"></div>
<div class="cell r" style="left:484px;width:142px;top:139px;height:14px;line-height:13px">2,00</div>
<div class="ck" style="left:695px;top:140px;width:11px;height:11px;border-color:#7c7c7c;background:linear-gradient(135deg,#cfe0f2,#f4f8fc)"><svg width="9" height="9" style="position:absolute;left:0;top:0"><path d="M1.5 4.5 L3.8 7 L8 1.5" stroke="#8aa6c6" stroke-width="1.8" fill="none"/></svg></div>
<div class="a" style="left:0;top:153px;width:772px;height:1px;background:#d2d2d2"></div>
<div class="cell" style="left:2px;top:153px;height:14px;line-height:13px">1010</div><div class="cell" style="left:31px;top:153px;height:14px;line-height:13px">-</div><div class="cell" style="left:41px;top:153px;height:14px;line-height:13px;letter-spacing:0.15px;word-spacing:0.8px">Straord. fer. diurno - 36 ore</div>
<div class="ck" style="left:236px;top:154px;width:11px;height:11px;border-color:#858585;background:linear-gradient(135deg,#f0f0f0,#fdfdfd 60%,#f2f2f2)"></div>
<div class="cell r" style="left:484px;width:142px;top:153px;height:14px;line-height:13px">13,00</div>
<div class="ck" style="left:695px;top:154px;width:11px;height:11px;border-color:#7c7c7c;background:linear-gradient(135deg,#cfe0f2,#f4f8fc)"><svg width="9" height="9" style="position:absolute;left:0;top:0"><path d="M1.5 4.5 L3.8 7 L8 1.5" stroke="#8aa6c6" stroke-width="1.8" fill="none"/></svg></div>
<div class="a" style="left:0;top:166px;width:772px;height:1px;background:#d2d2d2"></div>
<div class="cell" style="left:2px;top:167px;height:14px;line-height:13px">1010</div><div class="cell" style="left:31px;top:167px;height:14px;line-height:13px">-</div><div class="cell" style="left:41px;top:167px;height:14px;line-height:13px;letter-spacing:0.15px;word-spacing:0.8px">Straord. fer. diurno - 36 ore</div>
<div class="ck" style="left:236px;top:168px;width:11px;height:11px;border-color:#858585;background:linear-gradient(135deg,#f0f0f0,#fdfdfd 60%,#f2f2f2)"></div>
<div class="cell r" style="left:484px;width:142px;top:167px;height:14px;line-height:13px">13,00</div>
<div class="ck" style="left:695px;top:168px;width:11px;height:11px;border-color:#7c7c7c;background:linear-gradient(135deg,#cfe0f2,#f4f8fc)"><svg width="9" height="9" style="position:absolute;left:0;top:0"><path d="M1.5 4.5 L3.8 7 L8 1.5" stroke="#8aa6c6" stroke-width="1.8" fill="none"/></svg></div>
<div class="a" style="left:0;top:180px;width:772px;height:1px;background:#d2d2d2"></div>
<div class="cell" style="left:2px;top:181px;height:14px;line-height:13px">1010</div><div class="cell" style="left:31px;top:181px;height:14px;line-height:13px">-</div><div class="cell" style="left:41px;top:181px;height:14px;line-height:13px;letter-spacing:0.15px;word-spacing:0.8px">Straord. fer. diurno - 36 ore</div>
<div class="ck" style="left:236px;top:182px;width:11px;height:11px;border-color:#858585;background:linear-gradient(135deg,#f0f0f0,#fdfdfd 60%,#f2f2f2)"></div>
<div class="cell r" style="left:484px;width:142px;top:181px;height:14px;line-height:13px">13,00</div>
<div class="ck" style="left:695px;top:182px;width:11px;height:11px;border-color:#7c7c7c;background:linear-gradient(135deg,#cfe0f2,#f4f8fc)"><svg width="9" height="9" style="position:absolute;left:0;top:0"><path d="M1.5 4.5 L3.8 7 L8 1.5" stroke="#8aa6c6" stroke-width="1.8" fill="none"/></svg></div>
<div class="a" style="left:161px;top:15px;width:1px;height:182px;background:#c4c4c4"></div>
<div class="a" style="left:323px;top:15px;width:1px;height:182px;background:#c4c4c4"></div>
<div class="a" style="left:484px;top:15px;width:1px;height:182px;background:#c4c4c4"></div>
<div class="a" style="left:628px;top:15px;width:1px;height:182px;background:#c4c4c4"></div>
<div class="a" style="left:773px;top:16px;width:13px;height:13px;border:1px solid #8a8a8a;border-radius:2px;background:linear-gradient(#fff,#ececec)"><div class="a" style="left:2.5px;top:3.5px;border-left:3.5px solid transparent;border-right:3.5px solid transparent;border-bottom:3.5px solid #202020"></div></div>
<div class="a" style="left:773px;top:29px;width:13px;height:40px;border:1px solid #7a9ec4;border-radius:2px;background:linear-gradient(90deg,#a8ccf0,#cfe6fc 50%,#9cc4ec)"></div>
<div class="a" style="left:776px;top:44px;width:7px;height:1px;background:#7aa0c8"></div>
<div class="a" style="left:776px;top:46px;width:7px;height:1px;background:#7aa0c8"></div>
<div class="a" style="left:776px;top:48px;width:7px;height:1px;background:#7aa0c8"></div>
<div class="a" style="left:776px;top:50px;width:7px;height:1px;background:#7aa0c8"></div>
<div class="a" style="left:773px;top:183px;width:13px;height:12px;border:1px solid #8a8a8a;border-radius:2px;background:linear-gradient(#fff,#ececec)"><div class="a" style="left:2.5px;top:3.5px;border-left:3.5px solid transparent;border-right:3.5px solid transparent;border-top:3.5px solid #202020"></div></div>
</div>
<div class="btn" style="left:14px;top:473px;width:106px;height:20px"></div>
<svg class="a" style="left:24px;top:474px" width="15" height="15"><rect x="2" y="4.5" width="9" height="9" fill="#d8f0d8" stroke="#666" stroke-width="1"/><path d="M2.5 8 L5.5 11 L12.5 2.5" stroke="#2e9a32" stroke-width="2.6" fill="none"/></svg>
<div class="t" style="left:41px;top:475px;font-size:9.3px">De<span style="text-decoration:underline">s</span>eleziona tutti</div>
<div class="a" style="left:6px;top:503px;width:789px;height:1px;background:#808080"></div>
<div class="a" style="left:6px;top:504px;width:789px;height:1px;background:#fdfdfd"></div>
<div class="a" style="left:6px;top:503px;width:1px;height:34px;background:#808080"></div>
<div class="btn" style="left:632px;top:512px;width:72px;height:20px;border-color:#b4b4b4;background:linear-gradient(#fbfbfb,#efefef)"></div>
<svg class="a" style="left:642px;top:515px" width="14" height="12"><path d="M1 6 L6 1 V4 H12 V8 H6 V11 Z" fill="#8e8e8e"/></svg>
<div class="t" style="left:659px;top:514px;color:#9a9a9a;font-size:9.5px">Indietro</div>
<div class="btn" style="left:706px;top:512px;width:72px;height:20px"></div>
<div class="t" style="left:719px;top:514px;font-size:9.8px;color:#111">Avanti</div>
<svg class="a" style="left:750px;top:515px" width="13" height="12"><path d="M12 6 L7 1 V4 H1 V8 H7 V11 Z" fill="#4a8ad6" stroke="#2a5a9a" stroke-width="0.6"/></svg>
<div class="a" style="left:6px;top:537px;width:611px;height:1px;background:#8a8a8a"></div>
<div class="a" style="left:6px;top:537px;width:1px;height:17px;background:#8a8a8a"></div>
<div class="a" style="left:621px;top:537px;width:85px;height:1px;background:#8a8a8a"></div>
<div class="a" style="left:621px;top:537px;width:1px;height:17px;background:#8a8a8a"></div>
<div class="a" style="left:708px;top:537px;width:86px;height:1px;background:#8a8a8a"></div>
<div class="a" style="left:708px;top:537px;width:1px;height:17px;background:#8a8a8a"></div>
<svg class="a" style="left:623px;top:539px" width="14" height="14"><defs><linearGradient id="pb623" x1="0" x2="1"><stop offset="0" stop-color="#f0b050"/><stop offset="0.45" stop-color="#d86030"/><stop offset="1" stop-color="#902818"/></linearGradient></defs><path d="M1.5 13 Q1.5 6.5 6.5 6.5 Q11.5 6.5 11.5 13 Z" fill="url(#pb623)"/><circle cx="7" cy="4.2" r="2.9" fill="#f8cc90"/><path d="M4.1 4 Q4.3 1 7 1 Q9.7 1 9.9 4 Q8.5 2.5 7 2.6 Q5.5 2.5 4.1 4 Z" fill="#9a7830"/></svg>
<svg class="a" style="left:711px;top:539px" width="14" height="14"><defs><linearGradient id="pbi" x1="0" x2="1"><stop offset="0" stop-color="#f0b050"/><stop offset="0.45" stop-color="#d86030"/><stop offset="1" stop-color="#902818"/></linearGradient><radialGradient id="ib" cx="0.4" cy="0.35" r="0.7"><stop offset="0" stop-color="#60b0f0"/><stop offset="1" stop-color="#0c4c98"/></radialGradient></defs><path d="M0.5 13 Q0.5 6.5 5.5 6.5 Q10 6.5 10 13 Z" fill="url(#pbi)"/><circle cx="5.5" cy="4.2" r="2.8" fill="#f8cc90"/><path d="M2.7 4 Q2.9 1 5.5 1 Q8.1 1 8.3 4 Q7 2.5 5.5 2.6 Q4 2.5 2.7 4 Z" fill="#9a7830"/><circle cx="8.5" cy="9" r="3.7" fill="url(#ib)"/><rect x="8" y="6.8" width="1.2" height="1" fill="#d8f0ff"/><rect x="8" y="8.3" width="1.2" height="3" fill="#d8f0ff"/></svg>
</body></html>
